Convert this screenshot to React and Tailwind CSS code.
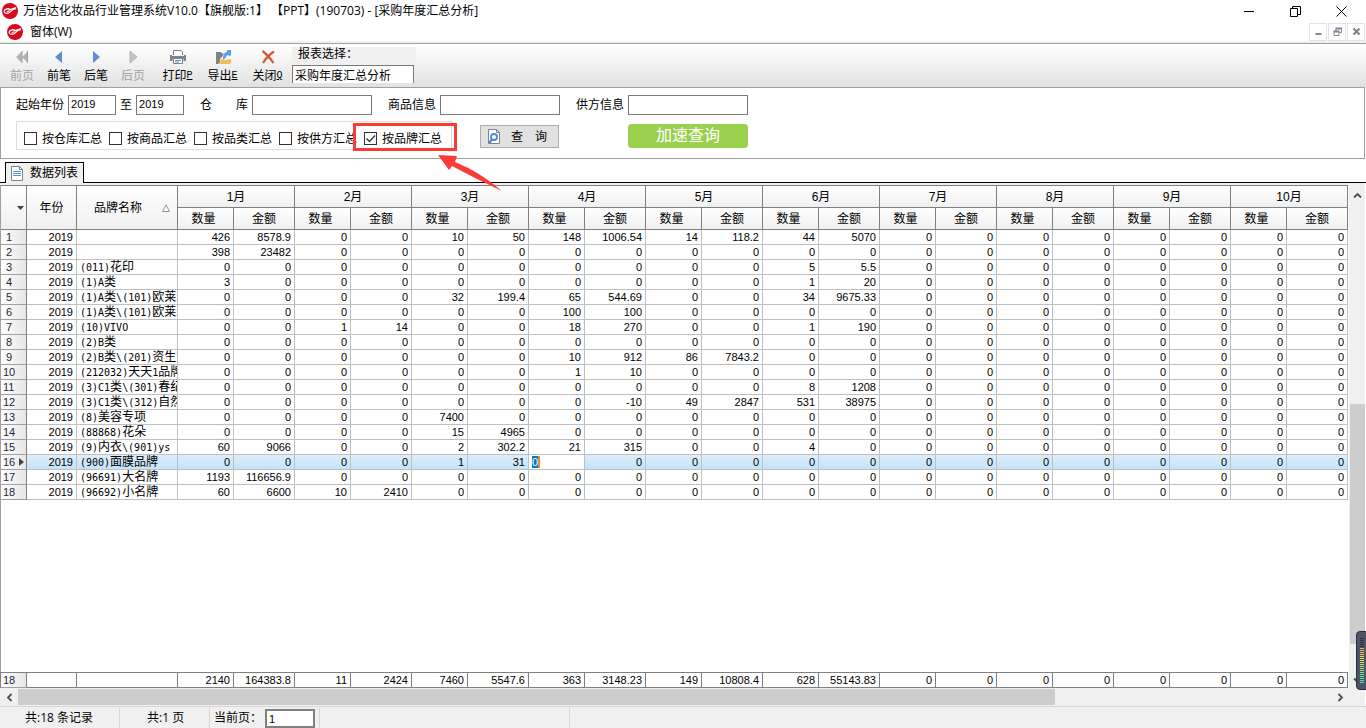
import { useState } from 'react';
import clsx from 'clsx';

const MONTHS = ['1月', '2月', '3月', '4月', '5月', '6月', '7月', '8月', '9月', '10月'];

// one entry per row: name, then quantity / amount pairs; missing months are 0
const ROWS = [
  ['', 426, 8578.9, 0, 0, 10, 50, 148, 1006.54, 14, 118.2, 44, 5070],
  ['', 398, 23482],
  ['(011)花印', 0, 0, 0, 0, 0, 0, 0, 0, 0, 0, 5, 5.5],
  ['(1)A类', 3, 0, 0, 0, 0, 0, 0, 0, 0, 0, 1, 20],
  ['(1)A类\\(101)欧莱雅', 0, 0, 0, 0, 32, 199.4, 65, 544.69, 0, 0, 34, 9675.33],
  ['(1)A类\\(101)欧莱雅', 0, 0, 0, 0, 0, 0, 100, 100],
  ['(10)VIVO', 0, 0, 1, 14, 0, 0, 18, 270, 0, 0, 1, 190],
  ['(2)B类'],
  ['(2)B类\\(201)资生堂', 0, 0, 0, 0, 0, 0, 10, 912, 86, 7843.2],
  ['(212032)天天1品牌', 0, 0, 0, 0, 0, 0, 1, 10],
  ['(3)C1类\\(301)春纪', 0, 0, 0, 0, 0, 0, 0, 0, 0, 0, 8, 1208],
  ['(3)C1类\\(312)自然', 0, 0, 0, 0, 0, 0, 0, -10, 49, 2847, 531, 38975],
  ['(8)美容专项', 0, 0, 0, 0, 7400],
  ['(88868)花朵', 0, 0, 0, 0, 15, 4965],
  ['(9)内衣\\(901)ys', 60, 9066, 0, 0, 2, 302.2, 21, 315, 0, 0, 4],
  ['(900)面膜品牌', 0, 0, 0, 0, 1, 31],
  ['(96691)大名牌', 1193, 116656.9],
  ['(96692)小名牌', 60, 6600, 10, 2410],
];

const TOTALS = [2140, 164383.8, 11, 2424, 7460, 5547.6, 363, 3148.23, 149, 10808.4, 628, 55143.83];

const CURRENT_ROW = 15;
const EDIT_COL = 6;

const GROUPS = ['按仓库汇总', '按商品汇总', '按品类汇总', '按供方汇总', '按品牌汇总'];

function fill(values) {
  return MONTHS.flatMap((_, i) => [values[i * 2] ?? 0, values[i * 2 + 1] ?? 0]);
}

function Logo() {
  return (
    <svg className="size-4 shrink-0" viewBox="0 0 16 16">
      <circle cx="8" cy="8" r="8" fill="#d9081c" />
      <path d="M2 8.6c.8-3 4.600-3.600 6.200-1.900L14 4.600" fill="none" stroke="#fff" strokeWidth="1.300" />
      <path d="M2 8.600c.8 2.400 4.800 2.300 6.200.3 1.200-1.700 3-2.900 5.600-3.200" fill="none" stroke="#fff" strokeWidth="1.100" />
      <path d="M4.500 8.300h3M5.200 9.600l2.500-3" fill="none" stroke="#fff" strokeWidth=".8" />
    </svg>
  );
}

function FirstIcon() {
  return (
    <svg className="h-4 w-5" viewBox="0 0 20 16">
      <path d="M10 2v12L4 8zM16 2v12l-6-6z" fill="#b4b4b4" />
      <path d="M10 2v12M15.500 2v12" stroke="#a0a0a0" />
    </svg>
  );
}

function PrevIcon() {
  return (
    <svg className="h-4 w-5" viewBox="0 0 20 16">
      <path d="M13 2v12L6 8z" fill="#5c8ed8" />
    </svg>
  );
}

function NextIcon({ disabled }) {
  return (
    <svg className="h-4 w-5" viewBox="0 0 20 16">
      <path d="M7 2v12l7-6z" fill={disabled ? '#c4c4c4' : '#5c8ed8'} stroke={disabled ? '#a8a8a8' : 'none'} strokeWidth=".8" />
    </svg>
  );
}

function PrintIcon() {
  return (
    <svg className="h-4 w-5" viewBox="0 0 20 16">
      <path d="M5.500 6V1.500H13l1.500 1.500V6" fill="#fff" stroke="#7f8287" />
      <path d="M2 6h2v1h12V6h2v6h-2.500v-2h-11v2H2z" fill="#7f8287" />
      <path d="M5.500 9.500h9v5h-9z" fill="#fff" stroke="#7f8287" />
      <path d="M7 11.500h6M7 13h4" stroke="#5c8ed8" />
    </svg>
  );
}

function ExportIcon() {
  return (
    <svg className="h-4 w-5" viewBox="0 0 20 16">
      <path d="M3 3h5l1 1.500h2L9 8l-2 2v5H3z" fill="#7f8287" />
      <path d="M5 15 8 10.500l2-.5 2 1 6-1v4l-1 1z" fill="#edbd62" />
      <path d="M10 10c0-4 1-6.500 4-7V1h4v5.500l-2 1V6c-2 0-3 1-3.500 3.500z" fill="#5f9fe8" />
    </svg>
  );
}

function CloseIcon() {
  return (
    <svg className="h-4 w-5" viewBox="0 0 20 16">
      <path d="M4.500 2c4 3 7.500 7 11 12M16 2.500C11.500 5.500 8 9 5 14" fill="none" stroke="#d4593c" strokeWidth="2.200" />
    </svg>
  );
}

function DocIcon() {
  return (
    <svg className="h-[15px] w-3 shrink-0" viewBox="0 0 12 15">
      <path d="M.5.5h8l3 3v11H.5z" fill="#fff" stroke="#7f8287" />
      <path d="M8.500.5v3h3" fill="none" stroke="#7f8287" />
      <path d="M2 5.500h8M2 7.500h8M2 9.500h8" stroke="#5c8ed8" />
    </svg>
  );
}

function SearchDocIcon() {
  return (
    <svg className="h-[15px] w-3 shrink-0" viewBox="0 0 12 15">
      <path d="M.5.5h8l3 3v11H.5z" fill="#fff" stroke="#7f8287" />
      <path d="M8.500.5v3h3" fill="none" stroke="#7f8287" />
      <circle cx="6" cy="8" r="3" fill="#fff" stroke="#4f86d6" strokeWidth="1.800" />
      <path d="M4 10.500 1 14" stroke="#4f86d6" strokeWidth="2.200" />
    </svg>
  );
}

function ToolButton({ icon, label, hotkey, disabled }) {
  return (
    <button
      disabled={disabled}
      className={clsx('flex flex-col items-center', hotkey ? 'w-[31px]' : 'w-6', disabled ? 'text-[#a3a3a3]' : 'text-black')}
    >
      {icon}
      <span className="mt-[2px] flex h-[18px] items-center leading-[18px] whitespace-nowrap">
        {label}
        {hotkey && <u className="text-[10px] font-['Liberation_Mono',monospace]">{hotkey}</u>}
      </span>
    </button>
  );
}

function Field({ label, value, wide }) {
  return (
    <label className="flex items-center gap-1">
      <span className="whitespace-pre">{label}</span>
      <input
        defaultValue={value}
        className={clsx(
          "h-5 border border-[#7a7a7a] bg-white px-[2px] pb-[2px] text-[11px] font-['Liberation_Sans',sans-serif]",
          wide ? 'w-[120px]' : 'w-12'
        )}
      />
    </label>
  );
}

function GridCols() {
  return (
    <colgroup>
      <col className="w-[26px]" />
      <col className="w-[50px]" />
      <col className="w-[101px]" />
      {MONTHS.flatMap((m) => [
        <col key={m + 'q'} className="w-[56px]" />,
        <col key={m + 'a'} className="w-[61px]" />,
      ])}
    </colgroup>
  );
}

// half-width characters are set in the mono face, Chinese in the CJK face
function Name({ text }) {
  return text.split(/([\x00-\x7f]+)/).filter(Boolean).map((part, i) => (
    <span
      key={i}
      className={part.charCodeAt(0) < 128 ? "text-[10px] font-['DejaVu_Sans_Mono',monospace]" : 'text-[12px]'}
    >
      {part}
    </span>
  ));
}

const th = 'border-r border-b border-[#808080] p-0 font-normal bg-linear-to-b from-white to-[#f0f0f0]';
const rowHead = "border-r border-b border-[#a0a0a0] border-r-[#808080] p-0 pl-[2px] text-left font-normal text-[11px] bg-linear-to-r from-white to-[#e6e6e6] text-[#1f2937] font-['Liberation_Sans',sans-serif]";
const td = 'border-r border-b border-[#c0c0c0] p-0';
const num = "pr-[3px] text-right text-[11px] font-['Liberation_Sans',sans-serif]";
const current = 'bg-linear-to-b from-[#dceefd] to-[#c4e3fa]';

function DataGrid() {
  return (
    <table className="w-[1348px] table-fixed border-separate border-spacing-0 border-l border-t border-[#808080]">
      <GridCols />
      <thead>
        <tr className="h-[22px]">
          <th rowSpan={2} className={th}>
            <svg className="ml-4 h-1 w-[7px]" viewBox="0 0 7 4"><path d="M0 0h7L3.500 4z" fill="#444" /></svg>
          </th>
          <th rowSpan={2} className={th}>年份</th>
          <th rowSpan={2} className={th}>
            <span className="flex items-center justify-between pl-[17px] pr-[7px]">
              品牌名称
              <svg className="size-2" viewBox="0 0 8 8"><path d="M4 .8 7.400 7.500H.6z" fill="#fff" stroke="#888" strokeWidth=".9" /></svg>
            </span>
          </th>
          {MONTHS.map((m) => <th key={m} colSpan={2} className={th}>{m}</th>)}
        </tr>
        <tr className="h-[22px]">
          {MONTHS.flatMap((m) => [
            <th key={m + 'q'} className={clsx(th, 'pr-1')}>数量</th>,
            <th key={m + 'a'} className={th}>金额</th>,
          ])}
        </tr>
      </thead>
      <tbody className="leading-[14px]">
        {ROWS.map(([name, ...values], r) => {
          const active = r === CURRENT_ROW;
          return (
            <tr key={r} className="h-[15px]">
              <th className={rowHead}>
                <span className="flex items-center justify-between pr-[2px]">
                  <span className={r < 9 ? 'pl-[3px]' : undefined}>{r + 1}</span>
                  {active && <svg className="h-2 w-[5px]" viewBox="0 0 5 8"><path d="M0 0v8l5-4z" fill="#444" /></svg>}
                </span>
              </th>
              <td className={clsx(td, num, active && current)}>2019</td>
              <td className={clsx(td, active && current)}>
                <div className="h-[14px] overflow-hidden whitespace-nowrap pl-[3px]">
                  <Name text={name} />
                </div>
              </td>
              {fill(values).map((v, c) =>
                active && c === EDIT_COL ? (
                  <td key={c} className={clsx(td, 'bg-white')}>
                    <input
                      aria-label="4月 数量"
                      defaultValue={v}
                      className="ml-[3px] block h-3 w-2 border-r-2 border-[#f08a24] bg-[#0078d7] text-[11px] text-white font-['Liberation_Sans',sans-serif]"
                    />
                  </td>
                ) : (
                  <td key={c} className={clsx(td, num, active && current)}>{v}</td>
                )
              )}
            </tr>
          );
        })}
      </tbody>
    </table>
  );
}

function TotalsGrid() {
  const cell = 'border-r border-b border-[#808080] p-0';
  return (
    <table className="w-[1348px] table-fixed border-separate border-spacing-0 border-l border-t border-[#808080] leading-[14px]">
      <GridCols />
      <tbody>
        <tr className="h-[15px]">
          <th className={rowHead}>18</th>
          <td className={cell} />
          <td className={cell} />
          {fill(TOTALS).map((v, c) => <td key={c} className={clsx(cell, num)}>{v}</td>)}
        </tr>
      </tbody>
    </table>
  );
}

function Chevron({ className }) {
  return (
    <svg className={clsx('size-[9px] shrink-0', className)} viewBox="0 0 9 9">
      <path d="M1 6.500 4.500 3 8 6.500" fill="none" stroke="#505050" strokeWidth="1.800" />
    </svg>
  );
}

const METER = [
  '#2f3340', '#2f3340', '#2f3340', '#2f3340', '#2f3340', '#f2a046', '#f2a846', '#f0b844', '#eec844', '#e8d848', '#dce050', '#d0e054',
  '#c4e05c', '#b8e064', '#a4e06c', '#94e074', '#84e080', '#74e08c', '#64e098', '#58e0a4', '#4ce0b0', '#48e0b8', '#44e0c0',
];

function Meter() {
  return (
    <svg className="absolute right-0 bottom-[38px] z-10 h-[59px] w-[10px]" viewBox="0 0 10 59">
      <path d="M11 .5H4Q.5.5.5 4v51q0 3.500 3.500 3.500h7z" fill="#4f5567" stroke="#2b2e3a" />
      {METER.map((color, i) => (
        <rect key={i} x="4" y={7 + i * 2} width="4" height="1" fill={color} />
      ))}
    </svg>
  );
}

function WindowButtons() {
  return (
    <div className="ml-auto flex items-center gap-[35px] pr-[19px]">
      <button aria-label="最小化" className="block">
        <svg className="size-[11px]" viewBox="0 0 11 11"><path d="M0 5.500h10" stroke="#000" /></svg>
      </button>
      <button aria-label="还原" className="block">
        <svg className="size-[11px]" viewBox="0 0 11 11"><path d="M.5 2.500h7v8h-7zM2.500 2.500v-2h8v8h-3" fill="none" stroke="#000" /></svg>
      </button>
      <button aria-label="关闭" className="block">
        <svg className="size-[11px]" viewBox="0 0 11 11"><path d="m.5.5 10 10M10.500.5l-10 10" stroke="#000" /></svg>
      </button>
    </div>
  );
}

function ChildButtons() {
  const box = 'flex h-[18px] w-[18px] items-center justify-center border border-[#e3e3e3]';
  return (
    <div className="ml-auto flex gap-px pr-px">
      <button aria-label="最小化子窗口" className={box}>
        <svg className="size-[9px]" viewBox="0 0 9 9"><path d="M1.500 7h6" stroke="#7b8796" strokeWidth="2" /></svg>
      </button>
      <button aria-label="还原子窗口" className={box}>
        <svg className="size-[9px]" viewBox="0 0 9 9"><path d="M1 8.500V4.500h5v4H1M3 4V1.500h5.500v4H6.500" fill="none" stroke="#7b8796" /><path d="M.5 4.500h6M2.500 1.500H9" stroke="#7b8796" strokeWidth="2" /></svg>
      </button>
      <button aria-label="关闭子窗口" className={box}>
        <svg className="size-[9px]" viewBox="0 0 9 9"><path d="m1.500 1.500 6 6M7.500 1.500l-6 6" stroke="#7b8796" strokeWidth="2.200" /></svg>
      </button>
    </div>
  );
}

export default function App() {
  const [checked, setChecked] = useState(['按品牌汇总']);

  function toggle(name) {
    setChecked((list) => (list.includes(name) ? list.filter((n) => n !== name) : [...list, name]));
  }

  return (
    <div className="relative flex h-screen flex-col overflow-hidden bg-white text-[12px] leading-4 text-black font-['Liberation_Sans','Noto_Sans_CJK_SC',sans-serif]">
      <header className="font-['Open_Sans','Noto_Sans_CJK_SC',sans-serif]">
        <div className="flex h-[22px] items-center pl-[2px]">
          <Logo />
          <h1 className="ml-[5px] whitespace-nowrap">万信达化妆品行业管理系统V10.0【旗舰版:1】 【PPT】(190703) - [采购年度汇总分析]</h1>
          <WindowButtons />
        </div>
        <div className="flex h-[21px] items-center border-b-2 border-[#f0f0f0] pl-[7px]">
          <Logo />
          <button className="ml-[7px]">窗体(W)</button>
          <ChildButtons />
        </div>
      </header>

      <div className="flex h-11 shrink-0 border-t border-[#a0a0a0] bg-linear-to-b from-white to-[#e2e2e2] pl-[10px] pt-[5px]">
        <div className="flex items-start gap-[13px]">
          <ToolButton icon={<FirstIcon />} label="前页" disabled />
          <ToolButton icon={<PrevIcon />} label="前笔" />
          <ToolButton icon={<NextIcon />} label="后笔" />
          <ToolButton icon={<NextIcon disabled />} label="后页" disabled />
        </div>
        <div className="ml-[17px] flex items-start gap-[14px]">
          <ToolButton icon={<PrintIcon />} label="打印" hotkey="P" />
          <ToolButton icon={<ExportIcon />} label="导出" hotkey="E" />
          <ToolButton icon={<CloseIcon />} label="关闭" hotkey="Q" />
        </div>
        <label className="ml-[9px] -mt-[2px] flex w-[124px] flex-col">
          <span className="h-[18px] bg-[#f0f0f0] pl-[6px] leading-[14px]">报表选择：</span>
          <input
            defaultValue="采购年度汇总分析"
            className="h-[18px] w-[122px] border border-b-0 border-[#7a7a7a] bg-white px-[2px]"
          />
        </label>
      </div>

      <section className="relative mr-px flex h-[72px] shrink-0 flex-col border border-[#a0a0a0] pl-[15px] pt-[7px]">
        <div className="flex gap-4">
          <div className="flex gap-1">
            <Field label="起始年份" value="2019" />
            <Field label="至" value="2019" />
          </div>
          <Field label="仓　　库" wide />
          <Field label="商品信息" wide />
          <Field label="供方信息" wide />
        </div>
        <div className="mt-[6px] flex items-start">
          <fieldset className="flex h-[29px] w-[436px] items-center border border-[#dcdcdc] pl-[7px] pt-[6px]">
            {GROUPS.map((name) => (
              <label key={name} className="flex w-[85px] shrink-0 items-center gap-[5px] whitespace-nowrap">
                <span className="relative flex">
                  <input
                    type="checkbox"
                    checked={checked.includes(name)}
                    onChange={() => toggle(name)}
                    className="size-[13px] appearance-none border border-[#333] bg-white"
                  />
                  {checked.includes(name) && (
                    <svg className="pointer-events-none absolute inset-0 size-[13px]" viewBox="0 0 13 13">
                      <path d="m2.500 6.500 3 3 5.500-6" fill="none" stroke="#333" strokeWidth="1.300" />
                    </svg>
                  )}
                </span>
                {name}
              </label>
            ))}
          </fieldset>
          <button className="ml-7 mt-1 flex h-[23px] w-[79px] items-center border border-[#adadad] bg-[#e1e1e1] pl-[7px]">
            <SearchDocIcon />
            <span className="ml-[11px] whitespace-pre">查　询</span>
          </button>
          <button className="ml-[69px] mt-[3px] h-6 w-[120px] rounded-[4px] bg-[#99d04d] text-[16px] leading-6 text-white">
            加速查询
          </button>
        </div>
        <div className="absolute left-[352px] top-[35px] h-7 w-[104px] border-[3px] border-[#fb3b38]" />
        <svg className="absolute left-[437px] top-[66px] z-10 h-[38px] w-[65px]" viewBox="0 0 65 38">
          <path d="M0 1 19 2 17 8Q42 18 64 37 38 25 14 12L11 16z" fill="#fb3b38" />
        </svg>
      </section>

      <div className="flex h-6 shrink-0 items-end border-b border-black pl-[5px]">
        <button className="-mb-px flex h-[21px] items-center gap-[7px] border border-b-0 border-black bg-[#f0f0f0] pl-[5px] pr-[5px]">
          <DocIcon />
          数据列表
        </button>
      </div>

      <main className="mr-px flex min-h-0 flex-1 flex-col border-t-2 border-[#f0f0f0]">
        <div className="flex min-h-0 flex-1">
          <div className="flex min-w-0 flex-1 flex-col overflow-hidden">
            <div className="min-h-0 flex-1 overflow-hidden border-l border-[#a0a0a0] *:-ml-px">
              <DataGrid />
            </div>
            <TotalsGrid />
          </div>
          <div className="flex w-4 shrink-0 flex-col items-center justify-between bg-[#f0f0f0] pt-[6px] pb-[3px]">
            <Chevron />
            <div className="mt-auto mb-8 h-60 w-[15px] bg-[#cdcdcd]" />
            <Chevron className="rotate-180" />
          </div>
        </div>
        <div className="flex h-[18px] shrink-0 items-center bg-[#f0f0f0] pl-[5px] pr-5">
          <Chevron className="-rotate-90" />
          <div className="ml-1 h-4 w-[77.4%] bg-[#cdcdcd]" />
          <Chevron className="ml-auto rotate-90" />
        </div>
      </main>

      <footer className="flex h-[22px] shrink-0 border-t border-[#d7d7d7] bg-[#f0f0f0] pt-px leading-5 font-['Open_Sans','Noto_Sans_CJK_SC',sans-serif]">
        <div className="w-[120px] border-r border-[#d7d7d7] pl-[25px]">共:18 条记录</div>
        <div className="w-[90px] border-r border-[#d7d7d7] pl-[27px]">共:1 页</div>
        <label className="flex w-[110px] items-start border-r border-[#d7d7d7] pl-1">
          <span className="w-[51px] whitespace-nowrap">当前页：</span>
          <input
            defaultValue="1"
            className="mt-px h-[19px] w-[50px] border-2 border-[#808080] bg-white px-[2px] text-[11px] font-['Liberation_Sans',sans-serif]"
          />
        </label>
        <div className="w-[250px] border-r border-[#d7d7d7]" />
      </footer>

      <Meter />
    </div>
  );
}
